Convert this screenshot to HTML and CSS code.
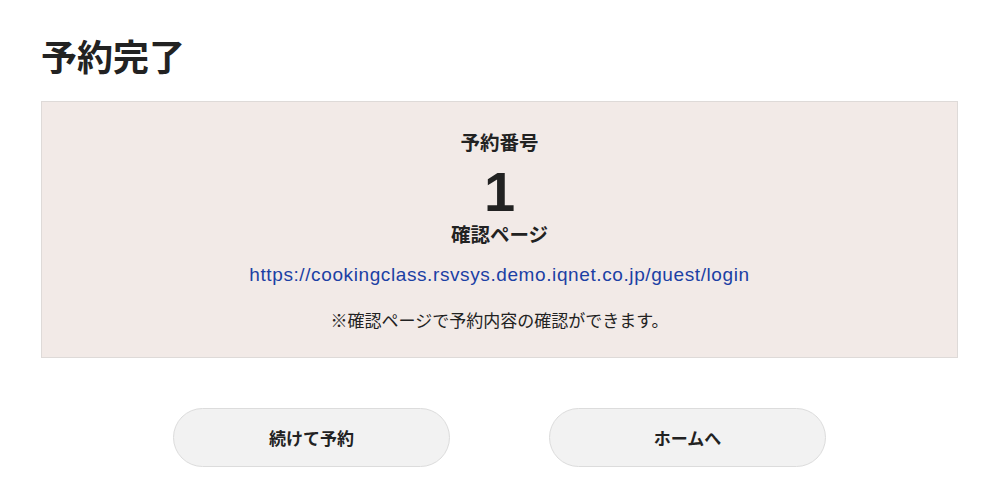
FILE: index.html
```html
<!DOCTYPE html>
<html lang="ja">
<head>
  <meta charset="utf-8">
  <link rel="stylesheet" href="styles.css">
</head>
<body>
  <div class="container">
    <h1 class="page-title">予約完了</h1>

    <div class="result-box">
      <div class="label">予約番号</div>
      <div class="number">1</div>
      <div class="label label-page">確認ページ</div>
      <div class="link"><a href="#">https://cookingclass.rsvsys.demo.iqnet.co.jp/guest/login</a></div>
      <p class="note">※確認ページで予約内容の確認ができます。</p>
    </div>

    <div class="actions">
      <a class="btn" href="#">続けて予約</a>
      <a class="btn" href="#">ホームへ</a>
    </div>
  </div>
</body>
</html>
```

FILE: styles.css
```css
body {
  margin: 0;
  font-family: "Liberation Sans", "Noto Sans CJK JP", sans-serif;
  color: #222;
  background: #fff;
}
.container { padding: 0 42px 0 41px; }
.page-title {
  font-size: 36px;
  line-height: 1.2;
  margin: 37px 0 21px;
  font-weight: bold;
}
.result-box {
  background-color: #f2eae7;
  border: 1px solid #dedad8;
  padding: 28px 20px 22px;
  text-align: center;
}
.label {
  font-size: 19.5px;
  font-weight: bold;
  line-height: 27px;
}
.label-page { margin-top: 2px; }
.number {
  font-size: 56px;
  font-weight: bold;
  line-height: 1;
  margin-top: 7px;
}
.link {
  font-size: 19px;
  letter-spacing: 0.6px;
  line-height: 25px;
  margin-top: 13px;
}
.link a { color: #1b40a4; text-decoration: none; }
.note {
  font-size: 17px;
  line-height: 1.5;
  margin: 22px 0 0;
}
.actions {
  display: flex;
  justify-content: center;
  gap: 99px;
  margin-top: 50px;
}
.btn {
  width: 277px;
  height: 59px;
  box-sizing: border-box;
  display: flex;
  align-items: center;
  justify-content: center;
  background-color: #f2f2f2;
  border: 1px solid #dcdcdc;
  border-radius: 30px;
  color: #222;
  font-size: 17px;
  font-weight: bold;
  text-decoration: none;
}
```
